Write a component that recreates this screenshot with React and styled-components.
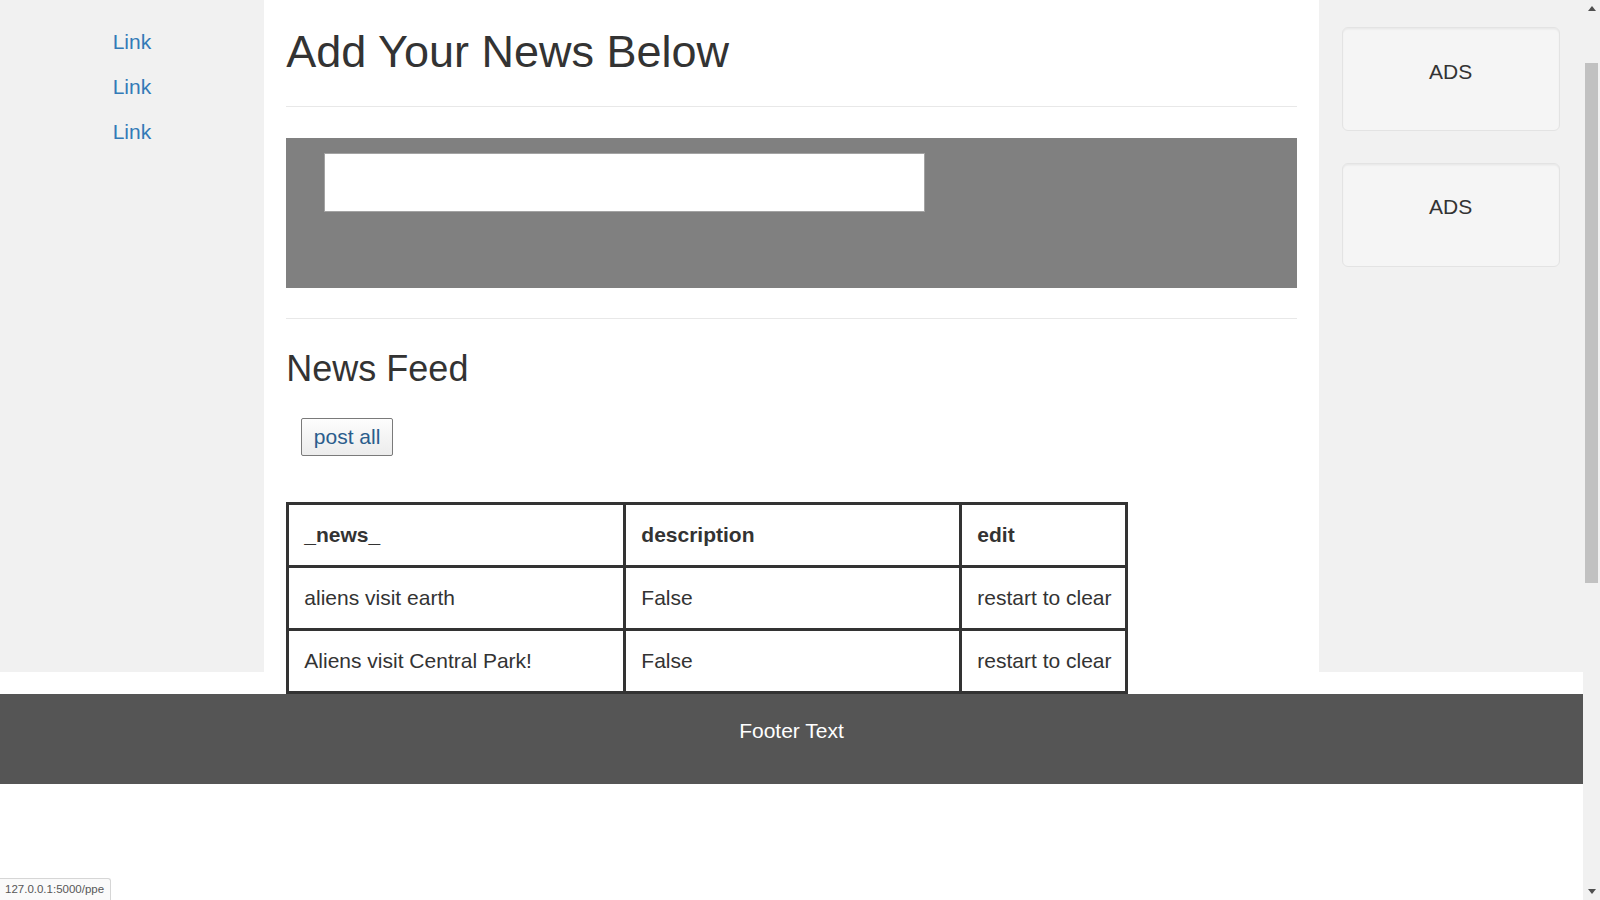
import React from "react";
import styled, { createGlobalStyle } from "styled-components";

const GlobalStyle = createGlobalStyle`
  html, body {
    margin: 0;
    padding: 0;
    height: 100%;
    overflow: hidden;
    background: #fff;
  }
  body {
    font-family: "Liberation Sans", Arial, Helvetica, sans-serif;
    font-size: 21px;
    line-height: 30px;
    color: #333;
  }
  * { box-sizing: border-box; }
`;

const Viewport = styled.div`
  display: flex;
  height: 900px;
  width: 1600px;
`;

const Page = styled.div`
  flex: 1;
  min-width: 0;
  display: flex;
  flex-direction: column;
  background: #fff;
`;

const Row = styled.div`
  display: grid;
  grid-template-columns: 2fr 8fr 2fr;
  align-items: start;
`;

const SideNav = styled.aside`
  height: 672px;
  background: #f1f1f1;
  padding: 26.5px 22.5px 0;
  text-align: center;
`;

const NavItem = styled.p`
  margin: 0 0 15px;
`;

const NavLink = styled.a`
  color: #337ab7;
  text-decoration: none;
`;

const Main = styled.main`
  padding: 0 22.5px;
  text-align: left;
`;

const Title = styled.h2`
  margin: 26.5px 0 15px;
  font-size: 45px;
  line-height: 49.5px;
  font-weight: 500;
`;

const Rule = styled.hr`
  margin: 30px 0 ${(p) => p.$after}px;
  border: 0;
  border-top: 1px solid #e8e8e8;
`;

const FormPanel = styled.form`
  height: 150px;
  background: #808080;
  padding: 15px 0 0 38px;
`;

const NewsInput = styled.input`
  display: block;
  width: 601px;
  height: 59px;
  border: 1px solid #a3a3a3;
  background: #fff;
  padding: 0 8px;
  font: inherit;
  outline: none;
`;

const SubTitle = styled.h3`
  margin: 30px 0 15px;
  font-size: 36px;
  line-height: 39.6px;
  font-weight: 500;
`;

const ButtonWrap = styled.div`
  padding: 14px 15px 15px;
`;

const PostButton = styled.button`
  font-family: inherit;
  font-size: 21px;
  line-height: 30px;
  color: #2a5d8c;
  padding: 3px 11.5px;
  border: 1px solid #7a7a7a;
  border-radius: 2px;
  background: linear-gradient(#fdfdfd, #ececec);
  cursor: pointer;
`;

const NewsTable = styled.table`
  margin-top: 31px;
  width: 842px;
  table-layout: fixed;
  border-collapse: collapse;
  border: 3px solid #333;
`;

const Cell = styled.td`
  border: 3px solid #333;
  padding: 15px 15px;
  line-height: 30px;
  text-align: left;
  vertical-align: middle;
  white-space: nowrap;
  font-weight: ${(p) => (p.$head ? 700 : 400)};
`;

const RightNav = styled(SideNav)`
  padding-top: 27px;
`;

const Well = styled.div`
  min-height: 30px;
  padding: 28.5px;
  margin: 0 1px 31.5px 0;
  background: #f5f5f5;
  border: 1.5px solid #e3e3e3;
  border-radius: 6px;
  box-shadow: inset 0 1.5px 1.5px rgba(0, 0, 0, 0.05);
`;

const WellText = styled.p`
  margin: 0 0 15px;
`;

const Footer = styled.footer`
  background: #555;
  color: #fff;
  padding: 22.5px;
  text-align: center;
`;

const FooterText = styled.p`
  margin: 0 0 15px;
`;

const Scrollbar = styled.div`
  width: 17px;
  flex: 0 0 17px;
  display: flex;
  flex-direction: column;
  background: #f1f1f1;
`;

const ScrollArrow = styled.div`
  height: 17px;
  display: flex;
  align-items: center;
  justify-content: center;
`;

const ScrollTrack = styled.div`
  flex: 1;
  padding-top: ${(p) => p.$offset}px;
  display: flex;
  justify-content: center;
`;

const Thumb = styled.div`
  width: 13px;
  height: ${(p) => p.$size}px;
  background: #c1c1c1;
`;

const StatusBubble = styled.div`
  position: fixed;
  left: 0;
  bottom: 0;
  height: 22px;
  padding: 0 6px 0 5px;
  background: #fafafa;
  border-top: 1px solid #d6d6d6;
  border-right: 1px solid #d6d6d6;
  border-top-right-radius: 3px;
  font-family: "Liberation Sans", Arial, sans-serif;
  font-size: 11.5px;
  line-height: 21px;
  color: #575757;
`;

const rows = [
  ["aliens visit earth", "False", "restart to clear"],
  ["Aliens visit Central Park!", "False", "restart to clear"],
];

export default function App() {
  return (
    <>
      <GlobalStyle />
      <Viewport>
        <Page>
          <Row>
            <SideNav>
              {[0, 1, 2].map((i) => (
                <NavItem key={i}>
                  <NavLink href="#">Link</NavLink>
                </NavItem>
              ))}
            </SideNav>
            <Main>
              <Title>Add Your News Below</Title>
              <Rule $after={31} />
              <FormPanel onSubmit={(e) => e.preventDefault()}>
                <NewsInput type="text" />
              </FormPanel>
              <Rule $after={30} />
              <SubTitle>News Feed</SubTitle>
              <ButtonWrap>
                <PostButton type="button">post all</PostButton>
              </ButtonWrap>
              <NewsTable>
                <colgroup>
                  <col style={{ width: 337 }} />
                  <col style={{ width: 336 }} />
                  <col />
                </colgroup>
                <thead>
                  <tr>
                    <Cell as="th" $head>_news_</Cell>
                    <Cell as="th" $head>description</Cell>
                    <Cell as="th" $head>edit</Cell>
                  </tr>
                </thead>
                <tbody>
                  {rows.map((r, i) => (
                    <tr key={i}>
                      {r.map((c, j) => (
                        <Cell key={j}>{c}</Cell>
                      ))}
                    </tr>
                  ))}
                </tbody>
              </NewsTable>
            </Main>
            <RightNav>
              <Well>
                <WellText>ADS</WellText>
              </Well>
              <Well>
                <WellText>ADS</WellText>
              </Well>
            </RightNav>
          </Row>
          <Footer>
            <FooterText>Footer Text</FooterText>
          </Footer>
        </Page>
        <Scrollbar>
          <ScrollArrow>
            <svg width="8" height="5" viewBox="0 0 8 5">
              <polygon points="0,5 4,0 8,5" fill="#505050" />
            </svg>
          </ScrollArrow>
          <ScrollTrack $offset={46}>
            <Thumb $size={520} />
          </ScrollTrack>
          <ScrollArrow>
            <svg width="8" height="5" viewBox="0 0 8 5">
              <polygon points="0,0 8,0 4,5" fill="#505050" />
            </svg>
          </ScrollArrow>
        </Scrollbar>
      </Viewport>
      <StatusBubble>127.0.0.1:5000/ppe</StatusBubble>
    </>
  );
}
